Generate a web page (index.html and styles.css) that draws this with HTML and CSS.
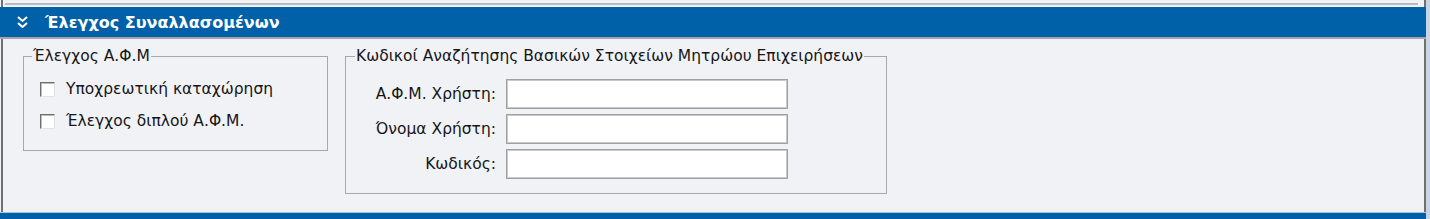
FILE: index.html
```
<!doctype html>
<html>
  <head>
    <meta charset="utf-8">
    <link rel="stylesheet" href="styles.css">
  </head>
  <body>
    <div class="window">
      <div class="strip"><div class="strip-line"></div></div>

      <div class="section-head">
        <svg class="chevron" width="11" height="12" viewBox="0 0 11 12">
          <polyline points="1,1 5.5,5 10,1" fill="none" stroke="#fff" stroke-width="2"/>
          <polyline points="1,7 5.5,11 10,7" fill="none" stroke="#fff" stroke-width="2"/>
        </svg>
        <span class="section-title">Έλεγχος Συναλλασομένων</span>
      </div>

      <div class="section-body">
        <fieldset class="group afm-check">
          <legend>Έλεγχος Α.Φ.Μ</legend>
          <label class="check row"><input type="checkbox"> <span>Υποχρεωτική καταχώρηση</span></label>
          <label class="check row"><input type="checkbox"> <span>Έλεγχος διπλού Α.Φ.Μ.</span></label>
        </fieldset>

        <fieldset class="group registry">
          <legend>Κωδικοί Αναζήτησης Βασικών Στοιχείων Μητρώου Επιχειρήσεων</legend>
          <div class="form-grid">
            <label for="afm_user">Α.Φ.Μ. Χρήστη:</label>
            <input id="afm_user" type="text">
            <label for="user_name">Όνομα Χρήστη:</label>
            <input id="user_name" type="text">
            <label for="user_code">Κωδικός:</label>
            <input id="user_code" type="password">
          </div>
        </fieldset>
      </div>

      <div class="foot"></div>
    </div>
    <div class="edge"></div>
  </body>
</html>
```

FILE: styles.css
```
html, body {
  margin: 0;
  height: 219px;
  overflow: hidden;
}
body {
  display: flex;
  background: #f1f2f6;
  font-family: "DejaVu Sans", sans-serif;
  font-size: 15.5px;
  color: #161616;
}
.window {
  width: 1426px;
  display: flex;
  flex-direction: column;
}
.edge {
  flex: 1;
  background: #c8d5e7;
}
.strip {
  height: 7px;
  margin-left: 1px;
  border-left: 2px solid #707070;
  border-right: 2px solid #707070;
}
.strip-line {
  height: 2px;
  margin: 3px 6px 0 2px;
  background: #b7bac0;
}
.section-head {
  height: 30px;
  background: #0061a9;
  border-bottom: 2px solid #a4a6ab;
  display: flex;
  align-items: center;
  color: #fff;
}
.chevron {
  flex-shrink: 0;
  margin-left: 17px;
  margin-right: 17px;
}
.section-title {
  font-weight: bold;
  font-size: 16px;
}
.section-body {
  height: 173px;
  box-sizing: border-box;
  margin-left: 1px;
  border-left: 2px solid #707070;
  border-right: 2px solid #707070;
  padding: 8px 0 0 20px;
  display: flex;
  align-items: flex-start;
  gap: 17px;
}
.foot {
  flex: 1;
  background: #0061a9;
  border-top: 1px solid #a9c3de;
}
fieldset.group {
  margin: 0;
  border: 1px solid #a6a8ad;
  min-width: 0;
}
fieldset.group legend {
  padding: 0 1px;
  line-height: 18px;
}
fieldset.afm-check {
  width: 305px;
  box-sizing: border-box;
  height: 104px;
  padding: 8px 0 0 8px;
}
fieldset.registry {
  width: 542px;
  box-sizing: border-box;
  height: 147px;
  padding: 14px 0 0 9px;
}
.check.row {
  display: flex;
  align-items: center;
  height: 32px;
  padding-left: 8px;
}
.check input {
  -webkit-appearance: none;
  appearance: none;
  width: 15px;
  height: 15px;
  margin: 0 11px 0 0;
  box-sizing: border-box;
  background: #fff;
  border: 1px solid;
  border-color: #6e6e6e #e2e2e2 #e2e2e2 #6e6e6e;
  box-shadow: inset 1px 1px 0 #bdbdbd;
}
.form-grid {
  display: grid;
  grid-template-columns: 141px 282px;
  grid-auto-rows: 30px;
  column-gap: 10px;
  row-gap: 5px;
}
.form-grid label {
  text-align: right;
  align-self: center;
}
.form-grid input {
  margin: 0;
  height: 30px;
  box-sizing: border-box;
  border: 1px solid #a0a0a0;
  box-shadow: inset 1px 1px 0 #c9c9c9, inset -1px -1px 0 #c9c9c9;
  background: #fff;
  font: inherit;
}
```
